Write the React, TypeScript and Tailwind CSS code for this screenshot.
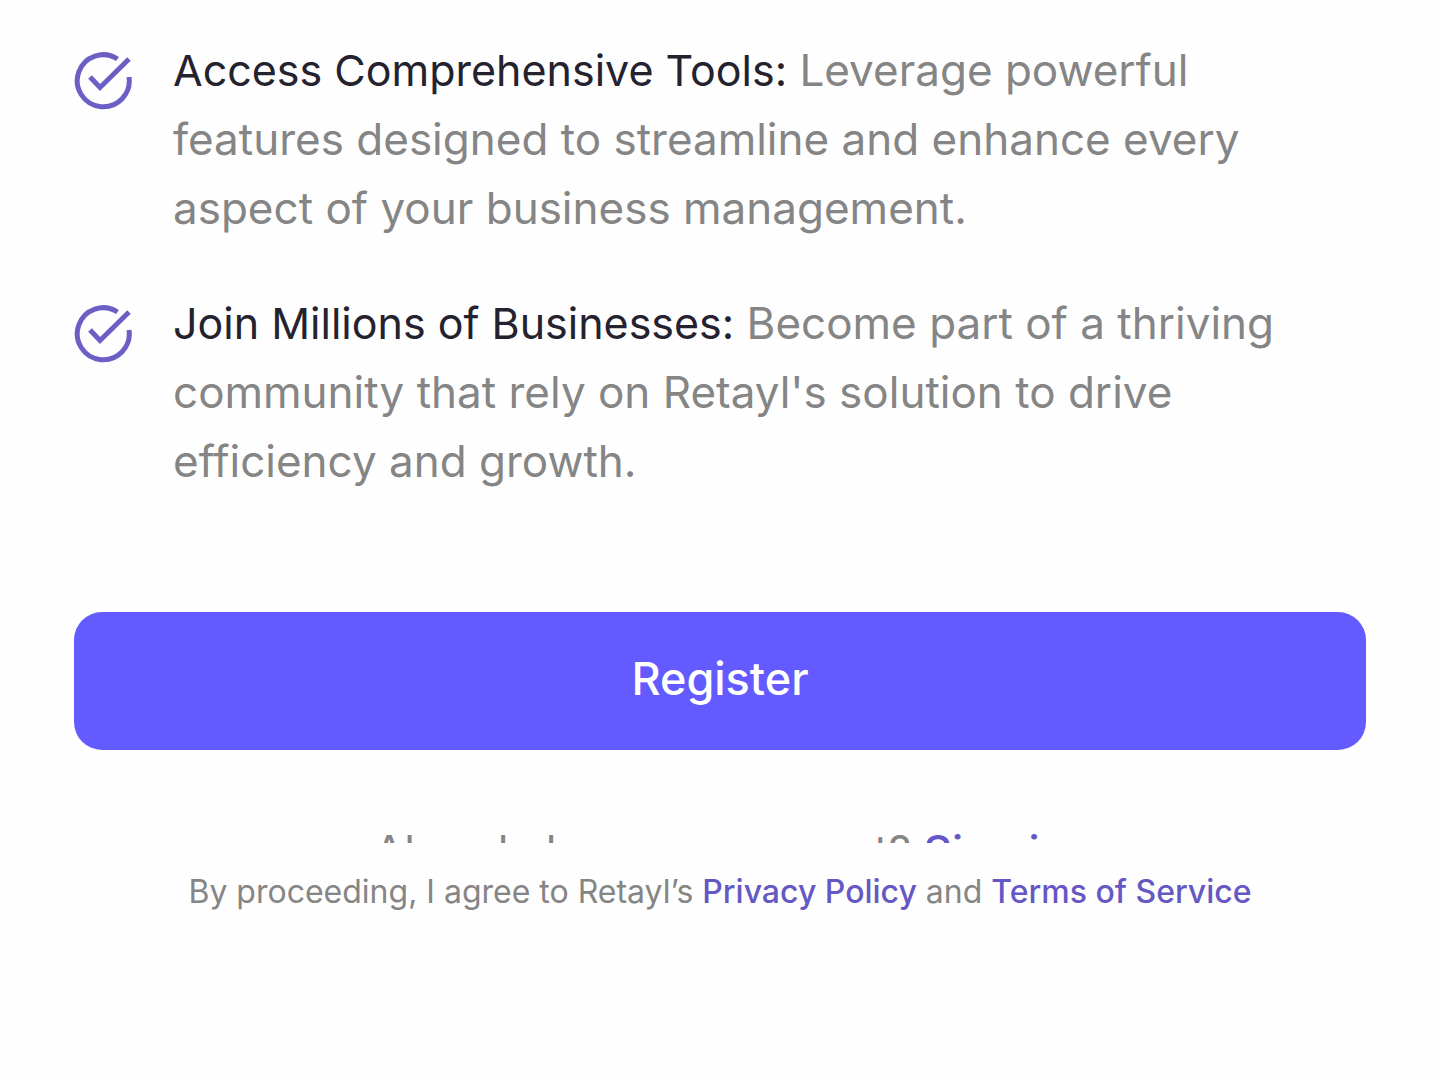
const benefits = [
  {
    title: "Access Comprehensive Tools:",
    text: "Leverage powerful features designed to streamline and enhance every aspect of your business management.",
  },
  {
    title: "Join Millions of Businesses:",
    text: "Become part of a thriving community that rely on Retayl's solution to drive efficiency and growth.",
  },
];

export default function App() {
  return (
    <main className="min-h-screen bg-[#fefefe] px-[74px] pt-9 font-[Inter,sans-serif] text-[#858585]">
      <ul className="space-y-[46px]">
        {benefits.map((b) => (
          <li key={b.title} className="flex gap-[39px] pr-10">
            <CheckIcon />
            <p className="text-[44px] leading-[69px]">
              <span className="text-[43px] text-[#24222f]">{b.title}</span> {b.text}
            </p>
          </li>
        ))}
      </ul>

      <button
        type="button"
        className="mt-[116px] h-[138px] w-full rounded-[28px] bg-[#635bff] pb-1 text-[45px] font-medium text-white"
      >
        Register
      </button>

      <div className="mt-[72px] h-[21px] overflow-hidden text-center text-[44px] leading-[58px]">
        Already have an account?{" "}
        <a href="#signin" className="font-medium text-[#6558c4]">
          Sign in
        </a>
      </div>

      <footer className="mt-[25px] text-center text-[32px] leading-[48px]">
        By proceeding, I agree to Retayl’s{" "}
        <a href="#privacy" className="font-medium text-[#6558c4]">
          Privacy Policy
        </a>{" "}
        and{" "}
        <a href="#terms" className="font-medium text-[#6558c4]">
          Terms of Service
        </a>
      </footer>
    </main>
  );
}

function CheckIcon() {
  return (
    <svg
      viewBox="0 0 60 60"
      fill="none"
      stroke="#6b5fc6"
      strokeWidth="5"
      className="mt-[15px] size-[60px] shrink-0"
      aria-hidden="true"
    >
      <path d="M43.500 8A26 26 0 1 0 55 26" />
      <path d="M16 26L26 36.500L55 8" />
    </svg>
  );
}
